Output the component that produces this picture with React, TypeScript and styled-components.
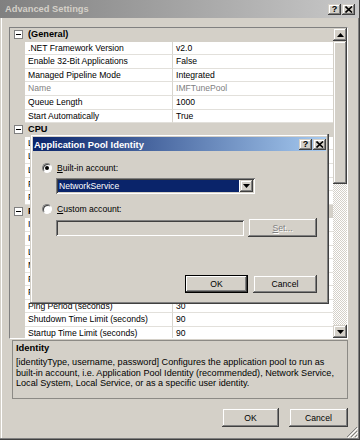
import React from 'react';
import styled, { createGlobalStyle } from 'styled-components';

const GlobalStyle = createGlobalStyle`
  html, body {
    margin: 0;
    padding: 0;
    background: #d4d0c8;
  }
  body {
    font-family: "Liberation Sans", Arial, sans-serif;
    font-size: 8.6px;
    color: #000;
  }
  * {
    box-sizing: border-box;
  }
`;

type Prop = { name: string; value: string; readOnly?: boolean };
type Category = { title: string; items: Prop[] };

const categories: Category[] = [
  {
    title: '(General)',
    items: [
      { name: '.NET Framework Version', value: 'v2.0' },
      { name: 'Enable 32-Bit Applications', value: 'False' },
      { name: 'Managed Pipeline Mode', value: 'Integrated' },
      { name: 'Name', value: 'IMFTunePool', readOnly: true },
      { name: 'Queue Length', value: '1000' },
      { name: 'Start Automatically', value: 'True' },
    ],
  },
  {
    title: 'CPU',
    items: [
      { name: 'Limit', value: '0' },
      { name: 'Limit Action', value: 'NoAction' },
      { name: 'Limit Interval (minutes)', value: '5' },
      { name: 'Processor Affinity Enabled', value: 'False' },
      { name: 'Processor Affinity Mask', value: '4294967295' },
    ],
  },
  {
    title: 'Process Model',
    items: [
      { name: 'Identity', value: 'NetworkService' },
      { name: 'Idle Time-out (minutes)', value: '20' },
      { name: 'Load User Profile', value: 'False' },
      { name: 'Maximum Worker Processes', value: '1' },
      { name: 'Ping Enabled', value: 'True' },
      { name: 'Ping Maximum Response Time (seconds)', value: '90' },
      { name: 'Ping Period (seconds)', value: '30' },
      { name: 'Shutdown Time Limit (seconds)', value: '90' },
      { name: 'Startup Time Limit (seconds)', value: '90' },
    ],
  },
];

const raised = `
  box-shadow: inset -1px -1px #404040, inset 1px 1px #d4d0c8, inset -2px -2px #808080, inset 2px 2px #fff;
`;

const sunken = `
  box-shadow: inset 1px 1px #808080, inset -1px -1px #fff, inset 2px 2px #404040, inset -2px -2px #d4d0c8;
`;

const CloseGlyph = () => (
  <svg width="8" height="7" viewBox="0 0 8 7">
    <path d="M0.5 0.5 L7 6.5 M7 0.5 L0.5 6.5" stroke="#000" strokeWidth="1.6" fill="none" />
  </svg>
);

const Arrow = ({ up }: { up?: boolean }) => (
  <svg width="7" height="4" viewBox="0 0 7 4">
    <path d={up ? 'M3.5 0 L7 4 L0 4 Z' : 'M0 0 L7 0 L3.5 4 Z'} fill="#000" />
  </svg>
);

const Grip = () => (
  <svg width="12" height="12" viewBox="0 0 12 12">
    <path d="M11 1 L1 11 M11 5 L5 11 M11 9 L9 11" stroke="#808080" strokeWidth="1" fill="none" />
    <path d="M12 2 L2 12 M12 6 L6 12 M12 10 L10 12" stroke="#fff" strokeWidth="1" fill="none" />
  </svg>
);

const App = () => {
  return (
    <>
      <GlobalStyle />
      <Window>
        <TitleBar>
          <TitleText>Advanced Settings</TitleText>
          <CaptionButtons>
            <CaptionButton>?</CaptionButton>
            <CaptionButton>
              <CloseGlyph />
            </CaptionButton>
          </CaptionButtons>
        </TitleBar>
        <Content>
          <Grid>
            <List>
              {categories.map((cat) => (
                <React.Fragment key={cat.title}>
                  <Row $category>
                    <Gutter>
                      <Expander />
                    </Gutter>
                    <CategoryTitle>{cat.title}</CategoryTitle>
                  </Row>
                  {cat.items.map((item) => (
                    <Row key={item.name}>
                      <Gutter />
                      <NameCell $dim={item.readOnly}>{item.name}</NameCell>
                      <ValueCell $dim={item.readOnly}>{item.value}</ValueCell>
                    </Row>
                  ))}
                </React.Fragment>
              ))}
            </List>
            <ScrollBar>
              <ScrollButton>
                <Arrow up />
              </ScrollButton>
              <Thumb />
              <Track />
              <ScrollButton>
                <Arrow />
              </ScrollButton>
            </ScrollBar>
          </Grid>
          <Help>
            <HelpTitle>Identity</HelpTitle>
            <HelpText>
              [identityType, username, password] Configures the application pool to run as
              <br />
              built-in account, i.e. Application Pool Identity (recommended), Network Service,
              <br />
              Local System, Local Service, or as a specific user identity.
            </HelpText>
          </Help>
          <Footer>
            <Button $width={57}>OK</Button>
            <Button $width={59}>Cancel</Button>
          </Footer>
        </Content>
        <GripCorner>
          <Grip />
        </GripCorner>

        <Dialog>
          <DialogTitleBar>
            <DialogTitleText>Application Pool Identity</DialogTitleText>
            <CaptionButtons>
              <CaptionButton>?</CaptionButton>
              <CaptionButton>
                <CloseGlyph />
              </CaptionButton>
            </CaptionButtons>
          </DialogTitleBar>
          <DialogBody>
            <RadioRow $top={11}>
              <Radio $checked />
              <span>
                <u>B</u>uilt-in account:
              </span>
            </RadioRow>
            <Select>
              <SelectValue>NetworkService</SelectValue>
              <DropButton>
                <Arrow />
              </DropButton>
            </Select>
            <RadioRow $top={9}>
              <Radio />
              <span>
                <u>C</u>ustom account:
              </span>
            </RadioRow>
            <FieldRow>
              <TextField />
              <Button $width={69} $disabled>
                <u>S</u>et...
              </Button>
            </FieldRow>
            <DialogFooter>
              <Button $width={63} $default>
                OK
              </Button>
              <Button $width={64}>Cancel</Button>
            </DialogFooter>
          </DialogBody>
        </Dialog>
      </Window>
    </>
  );
};

export default App;

const Window = styled.div`
  position: relative;
  width: 360px;
  height: 440px;
  display: flex;
  flex-direction: column;
  background: #d4d0c8;
  box-shadow: inset -1px -1px #404040, inset -2px -2px #808080, inset 1px 1px #d4d0c8, inset 2px 2px #fff;
  overflow: hidden;
`;

const TitleBar = styled.div`
  height: 18px;
  margin-right: 1px;
  display: flex;
  align-items: center;
  padding: 0 4px 0 5px;
  background: linear-gradient(to right, #808080, #c8c8c8);
`;

const TitleText = styled.div`
  flex: 1;
  font-size: 9.3px;
  font-weight: bold;
  color: #d4d0c8;
`;

const CaptionButtons = styled.div`
  display: flex;
  gap: 1px;
`;

const CaptionButton = styled.div`
  width: 13px;
  height: 11px;
  display: flex;
  align-items: center;
  justify-content: center;
  background: #d4d0c8;
  ${raised}
  font-size: 9px;
  font-weight: bold;
  line-height: 11px;
`;

const Content = styled.div`
  flex: 1;
  display: flex;
  flex-direction: column;
  padding: 9px 12px 0 9px;
`;

const Grid = styled.div`
  height: 312px;
  display: flex;
  border: 1px solid;
  border-color: #808080 #fff #fff #808080;
  background: #fff;
  overflow: hidden;
`;

const List = styled.div`
  flex: 1;
  overflow: hidden;
`;

const Row = styled.div<{ $category?: boolean }>`
  display: grid;
  grid-template-columns: 15px 148px 1fr;
  height: 13.6px;
  line-height: 12.6px;
  background: ${(p) => (p.$category ? '#d4d0c8' : '#fff')};
  white-space: nowrap;
`;

const Gutter = styled.div`
  display: flex;
  align-items: center;
  padding-left: 4px;
  background: #d4d0c8;
`;

const Expander = styled.div`
  position: relative;
  width: 9px;
  height: 9px;
  border: 1px solid #808080;
  background: #fff;

  &::after {
    content: '';
    position: absolute;
    left: 1px;
    top: 3px;
    width: 5px;
    height: 1px;
    background: #000;
  }
`;

const CategoryTitle = styled.div`
  grid-column: 2 / span 2;
  padding-left: 3px;
  font-weight: bold;
  font-size: 9.2px;
`;

const NameCell = styled.div<{ $dim?: boolean }>`
  padding-left: 3px;
  overflow: hidden;
  border-right: 1px solid #d8d5ce;
  border-bottom: 1px solid #e2e0db;
  color: ${(p) => (p.$dim ? '#808080' : '#000')};
`;

const ValueCell = styled.div<{ $dim?: boolean }>`
  padding-left: 3px;
  overflow: hidden;
  border-bottom: 1px solid #e2e0db;
  color: ${(p) => (p.$dim ? '#808080' : '#000')};
`;

const ScrollBar = styled.div`
  width: 14px;
  display: flex;
  flex-direction: column;
  background: repeating-conic-gradient(#d4d0c8 0 25%, #fff 0 50%) 0 0 / 2px 2px;
`;

const ScrollButton = styled.div`
  height: 13px;
  display: flex;
  align-items: center;
  justify-content: center;
  background: #d4d0c8;
  ${raised}
`;

const Thumb = styled.div`
  height: 143px;
  background: #d4d0c8;
  ${raised}
`;

const Track = styled.div`
  flex: 1;
`;

const Help = styled.div`
  height: 59px;
  margin: 1px 0 0 3px;
  padding: 0 3px;
  border: 1px solid #8c8a85;
`;

const HelpTitle = styled.div`
  font-weight: bold;
  font-size: 9.4px;
  line-height: 13px;
`;

const HelpText = styled.div`
  margin-top: 3px;
  font-size: 9.1px;
  line-height: 10.5px;
  white-space: nowrap;
`;

const Footer = styled.div`
  display: flex;
  justify-content: flex-end;
  gap: 10px;
  margin-top: 9px;
`;

const Button = styled.div<{ $width: number; $disabled?: boolean; $default?: boolean }>`
  width: ${(p) => p.$width}px;
  height: 19px;
  display: flex;
  align-items: center;
  justify-content: center;
  background: #d4d0c8;
  color: ${(p) => (p.$disabled ? '#808080' : '#000')};
  text-shadow: ${(p) => (p.$disabled ? '1px 1px #fff' : 'none')};
  ${(p) =>
    p.$default
      ? 'box-shadow: inset 0 0 0 1px #000, inset -2px -2px #404040, inset 2px 2px #fff, inset -3px -3px #808080;'
      : raised}
`;

const GripCorner = styled.div`
  position: absolute;
  right: 2px;
  bottom: 2px;
  width: 12px;
  height: 12px;
  display: flex;
`;

const Dialog = styled.div`
  position: absolute;
  left: 30px;
  top: 134px;
  width: 299px;
  height: 170px;
  padding: 3px;
  display: flex;
  flex-direction: column;
  background: #d4d0c8;
  box-shadow: inset -1px -1px #404040, inset -2px -2px #808080, inset 1px 1px #d4d0c8, inset 2px 2px #fff;
`;

const DialogTitleBar = styled.div`
  height: 14px;
  display: flex;
  align-items: center;
  padding: 0 0 0 1px;
  background: linear-gradient(to right, #0a246a, #a6caf0);
`;

const DialogTitleText = styled.div`
  flex: 1;
  font-size: 9.4px;
  font-weight: bold;
  color: #fff;
`;

const DialogBody = styled.div`
  flex: 1;
  display: flex;
  flex-direction: column;
  padding: 0 9px 0 9px;
`;

const RadioRow = styled.div<{ $top: number }>`
  height: 12px;
  margin-top: ${(p) => p.$top}px;
  display: flex;
  align-items: center;
  gap: 5px;
`;

const Radio = styled.div<{ $checked?: boolean }>`
  position: relative;
  width: 10px;
  height: 10px;
  border-radius: 50%;
  background: #fff;
  border: 1px solid;
  border-color: #808080 #fff #fff #808080;
  box-shadow: inset 1px 1px #404040;

  &::after {
    content: '';
    display: ${(p) => (p.$checked ? 'block' : 'none')};
    position: absolute;
    left: 2px;
    top: 2px;
    width: 4px;
    height: 4px;
    border-radius: 50%;
    background: #000;
  }
`;

const Select = styled.div`
  width: 199px;
  height: 16px;
  margin: 4px 0 0 14px;
  padding: 2px;
  display: flex;
  background: #fff;
  ${sunken}
`;

const SelectValue = styled.div`
  flex: 1;
  margin-right: 1px;
  padding-left: 1px;
  line-height: 12px;
  background: #0a246a;
  color: #fff;
`;

const DropButton = styled.div`
  width: 13px;
  display: flex;
  align-items: center;
  justify-content: center;
  background: #d4d0c8;
  ${raised}
`;

const FieldRow = styled.div`
  display: flex;
  align-items: flex-start;
  gap: 4px;
  margin: 3px 0 0 14px;
`;

const TextField = styled.div`
  width: 188px;
  height: 16px;
  margin-top: 2px;
  background: #d4d0c8;
  ${sunken}
`;

const DialogFooter = styled.div`
  display: flex;
  justify-content: flex-end;
  gap: 5px;
  margin-top: 38px;
  & > div {
    height: 18px;
  }
`;
